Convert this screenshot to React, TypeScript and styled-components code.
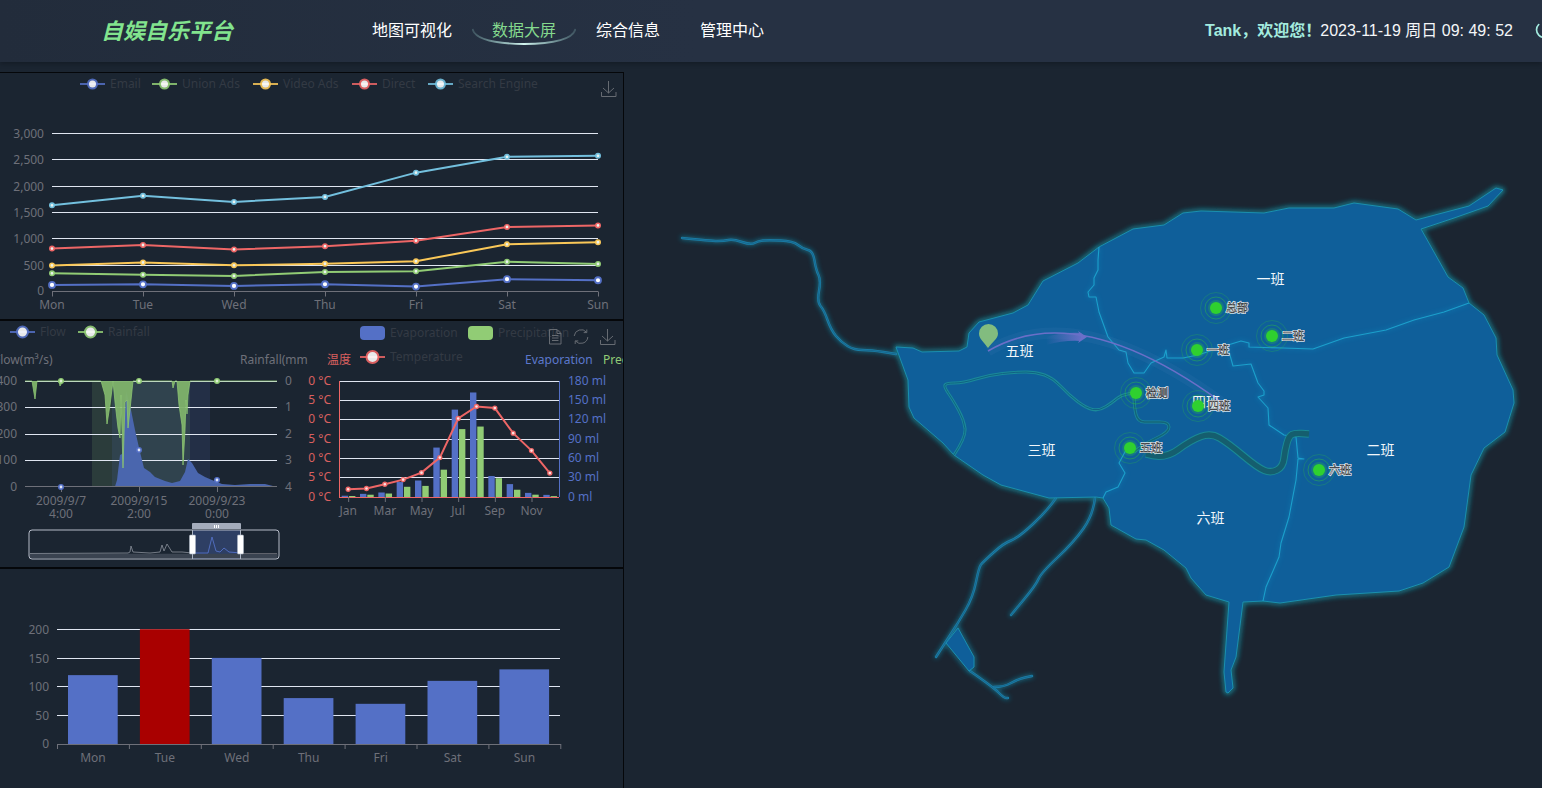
import React from "react";
import styled, { createGlobalStyle } from "styled-components";
import { Power } from "lucide-react";

const GlobalStyle = createGlobalStyle`
  html, body { margin: 0; padding: 0; height: 100%; overflow: hidden; background: #1b2531; }
  body { font-family: "Noto Sans", "Noto Sans CJK SC", sans-serif; }
  #root { height: 100%; }
`;

const Page = styled.div`
  width: 1542px;
  height: 788px;
  overflow: hidden;
  display: flex;
  flex-direction: column;
  background: #1b2531;
`;

const Header = styled.header`
  flex: 0 0 62px;
  height: 62px;
  box-sizing: border-box;
  padding-bottom: 4px;
  display: flex;
  align-items: center;
  background: linear-gradient(90deg, #222c3b 0%, #263143 45%, #263143 100%);
  box-shadow: 0 2px 4px rgba(10, 14, 20, 0.35);
  position: relative;
  z-index: 2;
`;

const Logo = styled.div`
  width: 251px;
  padding-left: 101px;
  flex: none;
  font: italic 700 22px "Noto Sans CJK SC", sans-serif;
  color: #82e48e;
`;

const Nav = styled.nav`
  display: flex;
  flex: none;
`;

const NavItem = styled.a<{ $active?: boolean }>`
  position: relative;
  padding: 0 20px;
  font: 400 16px/22px "Noto Sans CJK SC", sans-serif;
  color: ${(p) => (p.$active ? "#84d98e" : "#ffffff")};
`;

const NavArc = styled.svg`
  position: absolute;
  left: 0;
  top: 10px;
  width: 104px;
  height: 18px;
`;

const Status = styled.div`
  margin-left: 421px;
  flex: none;
  display: flex;
  align-items: center;
  font: 400 16px "Liberation Sans", "Noto Sans CJK SC", sans-serif;
  color: #f4f6f8;
  white-space: pre;
`;

const Greeting = styled.span`
  font-weight: 700;
  color: #a3ebdf;
  margin-right: -1px;
`;

const PowerSlot = styled.span`
  display: flex;
  margin-left: 21px;
  color: #a3ebdf;
`;

const Main = styled.main`
  flex: 1;
  display: flex;
  min-height: 0;
`;

const LeftColumn = styled.section`
  flex: 0 0 624px;
  padding-top: 10px;
  margin-left: -1px;
  width: 625px;
`;

const Panel = styled.div`
  height: 248px;
  box-sizing: border-box;
  border: 1px solid #05070a;
  display: flex;
  overflow: hidden;
`;

const ChartSvg = styled.svg<{ $w: number }>`
  display: block;
  flex: 0 0 ${(p) => p.$w}px;
  width: ${(p) => p.$w}px;
  height: 246px;
  overflow: hidden;
`;

const MapPane = styled.section`
  flex: 1;
  min-width: 0;
`;

const MapSvg = styled.svg`
  display: block;
  width: 919px;
  height: 726px;
`;

const AxisText = styled.text<{ $c?: string }>`
  font-size: 12px;
  fill: ${(p) => p.$c ?? "#6e7079"};
`;

const LegendText = styled.text`
  font-size: 12px;
  fill: #333a44;
`;

const GridLine = styled.line`
  stroke: #e0e6f1;
  stroke-width: 1;
`;

const AxisLine = styled.line<{ $c?: string }>`
  stroke: ${(p) => p.$c ?? "#6e7079"};
  stroke-width: 1;
`;

const ToolIcon = styled.g`
  fill: none;
  stroke: #666b72;
  stroke-width: 1;
`;

const RegionName = styled.text`
  font: 14px "Noto Sans CJK SC", sans-serif;
  fill: #f2f7fb;
  text-anchor: middle;
`;

const SiteHalo = styled.text`
  font: 400 11px "Noto Sans CJK SC", sans-serif;
  fill: none;
  stroke: #ffffff;
  stroke-opacity: 0.85;
  stroke-width: 2px;
`;

const SiteName = styled.text`
  font: 400 11px "Noto Sans CJK SC", sans-serif;
  fill: #ffffff;
  stroke: #16181a;
  stroke-width: 0.45px;
`;

const palette = { blue: "#5470c6", green: "#91cc75", yellow: "#fac858", red: "#ee6666", cyan: "#73c0de" };

type P = [number, number];
const linear = (pts: P[]) => "M" + pts.map((p) => p.join(" ")).join("L");
const smooth = (pts: P[]) => {
  let d = `M${pts[0][0]} ${pts[0][1]}`;
  for (let i = 1; i < pts.length - 1; i++) {
    const mx = (pts[i][0] + pts[i + 1][0]) / 2;
    const my = (pts[i][1] + pts[i + 1][1]) / 2;
    d += `Q${pts[i][0]} ${pts[i][1]} ${mx} ${my}`;
  }
  const l = pts[pts.length - 1];
  return d + `L${l[0]} ${l[1]}`;
};

const LegendLine = ({ x, y, c, r = 5 }: { x: number; y: number; c: string; r?: number }) => (
  <g>
    <line x1={x} x2={x + 25} y1={y} y2={y} stroke={c} strokeWidth={2} opacity={0.85} />
    <circle cx={x + 12.5} cy={y} r={r} fill="#fff" stroke={c} strokeWidth={2} opacity={0.9} />
  </g>
);

const Download = ({ x, y }: { x: number; y: number }) => (
  <ToolIcon transform={`translate(${x} ${y})`}>
    <path d="M7.5 0V12M2 7L7.5 12L13 7M0.5 11V15.5H15V11" />
  </ToolIcon>
);

/* ---------- stacked traffic lines ---------- */
const days = ["Mon", "Tue", "Wed", "Thu", "Fri", "Sat", "Sun"];
const stacked: { c: string; v: number[]; big?: boolean }[] = [
  { c: palette.blue, v: [120, 132, 101, 134, 90, 230, 210], big: true },
  { c: palette.green, v: [340, 314, 292, 368, 380, 560, 520] },
  { c: palette.yellow, v: [490, 546, 493, 522, 570, 890, 930] },
  { c: palette.red, v: [810, 878, 794, 856, 960, 1220, 1250] },
  { c: palette.cyan, v: [1630, 1810, 1695, 1790, 2250, 2550, 2570] },
];
const lineLegend = [
  { x: 80, t: "Email", c: palette.blue },
  { x: 152, t: "Union Ads", c: palette.green },
  { x: 253, t: "Video Ads", c: palette.yellow },
  { x: 352, t: "Direct", c: palette.red },
  { x: 428, t: "Search Engine", c: palette.cyan },
];

const TrafficChart = () => {
  const xs = days.map((_, i) => 52 + i * 91);
  const yOf = (v: number) => 291.3 - (v * 158.2) / 3000;
  const grid = [
    [133.5, "3,000"], [159.5, "2,500"], [186.5, "2,000"], [212.5, "1,500"], [238.5, "1,000"], [265.5, "500"],
  ] as [number, string][];
  return (
    <ChartSvg $w={623} viewBox="0 73 623 246">
      {lineLegend.map((l) => (
        <g key={l.t}>
          <LegendLine x={l.x} y={84} c={l.c} r={4.5} />
          <LegendText x={l.x + 30} y={88}>{l.t}</LegendText>
        </g>
      ))}
      <Download x={601} y={81} />
      {grid.map(([y, t]) => (
        <g key={t}>
          <GridLine x1={52} x2={598} y1={y} y2={y} />
          <AxisText x={44} y={y + 4} textAnchor="end">{t}</AxisText>
        </g>
      ))}
      <AxisText x={44} y={295} textAnchor="end">0</AxisText>
      <AxisLine x1={52} x2={598} y1={291.5} y2={291.5} />
      {xs.map((x, i) => (
        <g key={x}>
          <AxisLine x1={x + 0.5} x2={x + 0.5} y1={291.5} y2={296.5} />
          <AxisText x={x} y={309} textAnchor="middle">{days[i]}</AxisText>
        </g>
      ))}
      {stacked.map((s) => (
        <g key={s.c}>
          <path d={linear(s.v.map((v, i) => [xs[i], yOf(v)] as P))} fill="none" stroke={s.c} strokeWidth={2} />
          {s.v.map((v, i) => (
            <circle
              key={i}
              cx={xs[i]}
              cy={yOf(v)}
              r={s.big ? 3 : 2.2}
              fill={s.big ? "#fff" : "#eaf3ef"}
              stroke={s.c}
              strokeWidth={s.big ? 1.8 : 1.6}
            />
          ))}
        </g>
      ))}
    </ChartSvg>
  );
};

/* ---------- flow and rainfall ---------- */
const flowArea: P[] = [
  [25, 486], [60, 486.5], [115, 486.5], [117, 480], [120, 455], [122, 454], [124, 430], [126, 391], [130, 405], [135, 430],
  [140, 452], [144, 468], [150, 472], [155, 477], [165, 481], [172, 483], [180, 481], [185, 472], [188, 459],
  [192, 463], [198, 473], [205, 477], [212, 480], [222, 484], [235, 485], [250, 484], [265, 484], [277, 487], [25, 487],
];
const rainArea: P[] = [
  [25, 381], [32, 381], [35, 399], [37, 381], [59, 381], [60, 386], [63, 381], [101, 381], [105, 395], [107, 424], [110, 405],
  [113, 381], [115, 402], [118, 428], [120, 438], [121, 395], [123, 468], [125, 402], [127, 400], [128, 428], [131, 400],
  [133, 381], [172, 381], [173, 388], [175, 381], [177, 381], [179, 405], [182, 425], [183, 465], [185, 430], [186, 400],
  [187, 414], [188, 395], [190, 381], [277, 381],
];

const FlowChart = () => (
  <ChartSvg $w={308} viewBox="0 321 308 246">
    <LegendLine x={10} y={332} c={palette.blue} r={5.5} />
    <LegendText x={40} y={336}>Flow</LegendText>
    <LegendLine x={78} y={332} c={palette.green} r={5.5} />
    <LegendText x={108} y={336}>Rainfall</LegendText>
    <AxisText x={-6} y={364}>Flow(m³/s)</AxisText>
    <AxisText x={240} y={364}>Rainfall(mm)</AxisText>
    <rect x={92} y={381} width={98} height={106} fill="#91cc75" opacity={0.14} />
    <rect x={112} y={381} width={98} height={106} fill="#5470c6" opacity={0.14} />
    {[381.5, 407.5, 434.5, 460.5].map((y) => <GridLine key={y} x1={25} x2={277} y1={y} y2={y} />)}
    {["400", "300", "200", "100", "0"].map((t, i) => (
      <AxisText key={t} x={17} y={[385, 411, 438, 464, 491][i]} textAnchor="end">{t}</AxisText>
    ))}
    {["0", "1", "2", "3", "4"].map((t, i) => (
      <AxisText key={t} x={285} y={[385, 411, 438, 464, 491][i]}>{t}</AxisText>
    ))}
    <path d={linear(flowArea)} fill="#4a66ae" />
    <path d={linear(rainArea)} fill="#7fb36a" fillOpacity={0.95} stroke="#8cc472" strokeWidth={0.8} />
    <AxisLine x1={25} x2={277} y1={486.5} y2={486.5} />
    {[
      [61, "2009/9/7", "4:00"],
      [139, "2009/9/15", "2:00"],
      [217, "2009/9/23", "0:00"],
    ].map(([x, a, b]) => (
      <g key={a as string}>
        <AxisLine x1={(x as number) + 0.5} x2={(x as number) + 0.5} y1={487} y2={492} />
        <AxisText x={x as number} y={505} textAnchor="middle">{a}</AxisText>
        <AxisText x={x as number} y={518} textAnchor="middle">{b}</AxisText>
      </g>
    ))}
    {[[61, 487], [139, 450], [217, 480]].map(([x, y]) => (
      <circle key={x} cx={x} cy={y} r={2.2} fill="#dfe6f8" stroke={palette.blue} strokeWidth={1.6} />
    ))}
    {[61, 139, 217].map((x) => (
      <circle key={x} cx={x} cy={381} r={2.2} fill="#dff0d4" stroke={palette.green} strokeWidth={1.6} />
    ))}
    {/* range slider */}
    <rect x={192} y={530} width={49} height={29} fill="#5470c6" opacity={0.35} />
    <path d="M29.5 553.7H277.5V558H29.5Z" fill="#3a4350" />
    <path
      d={linear([[30, 553.5], [128, 553], [130, 552], [131, 546], [133, 552], [150, 553], [160, 552], [162, 545], [164, 551], [167, 544], [172, 552], [182, 552], [192, 553]])}
      fill="none"
      stroke="#8a909a"
      strokeWidth={0.8}
    />
    <path
      d={linear([[192, 553], [208, 553], [212, 537], [216, 551], [220, 552], [224, 548], [229, 552], [241, 553]])}
      fill="none"
      stroke={palette.blue}
      strokeWidth={0.9}
    />
    <path d="M241 553.5H277" stroke="#6e7079" strokeWidth={0.8} />
    <rect x={29} y={530} width={250} height={29} rx={3} fill="none" stroke="#b6bcc8" strokeWidth={1} />
    <path d="M192 529V523.5Q192 523 193 523H240Q241 523 241 524V529Z" fill="#a4acbb" />
    <path d="M214.5 525V528M216.5 525V528M218.5 525V528" stroke="#fff" strokeWidth={1} />
    <path d="M192.5 530V559M240.5 530V559" stroke="#aab3c2" strokeWidth={1} />
    <rect x={189.5} y={535} width={6} height={19} rx={1} fill="#fff" stroke="#aab3c2" strokeWidth={0.6} />
    <rect x={237.5} y={535} width={6} height={19} rx={1} fill="#fff" stroke="#aab3c2" strokeWidth={0.6} />
  </ChartSvg>
);

/* ---------- evaporation, precipitation, temperature ---------- */
const evap = [2, 4.9, 7, 23.2, 25.6, 76.7, 135.6, 162.2, 32.6, 20, 6.4, 3.3];
const precip = [2.6, 5.9, 9, 26.4, 28.7, 70.7, 175.6, 182.2, 48.7, 18.8, 6, 2.3];
const temp = [2, 2.2, 3.3, 4.5, 6.3, 10.2, 20.3, 23.4, 23, 16.5, 12, 6.2];
const climateGrid = [381.5, 400.5, 419.5, 439.5, 458.5, 477.5];

const ClimateChart = () => {
  const cx = (i: number) => 339 + (i + 0.5) * (220 / 12);
  const base = 497;
  const h = 116;
  return (
    <ChartSvg $w={315} viewBox="308 321 315 246">
      <rect x={360} y={326} width={25} height={14} rx={4} fill={palette.blue} />
      <LegendText x={390} y={337}>Evaporation</LegendText>
      <rect x={468} y={326} width={25} height={14} rx={4} fill={palette.green} />
      <LegendText x={498} y={337}>Precipitation</LegendText>
      <LegendLine x={360} y={357} c={palette.red} r={6} />
      <LegendText x={390} y={361}>Temperature</LegendText>
      <ToolIcon transform="translate(549 329)">
        <path d="M0.5 0.5H8L12 4.5V15H0.5ZM8 0.5V4.5H12M3 6.5H9.5M3 9H9.5M3 11.5H9.5" />
      </ToolIcon>
      <ToolIcon transform="translate(573 329)">
        <path d="M1.2 7A7 7 0 0 1 13.5 3.2M14.8 8A7 7 0 0 1 2.5 12M13.8 0.5V3.6H10.7M2.2 15V11.9H5.3" />
      </ToolIcon>
      <Download x={600} y={329} />
      <AxisText x={327} y={364} $c="#d9605f">温度</AxisText>
      <AxisText x={525} y={364} $c="#5c78cc">Evaporation</AxisText>
      <AxisText x={603} y={364} $c="#91cc75">Precipitation</AxisText>
      {climateGrid.map((y) => <GridLine key={y} x1={339} x2={559} y1={y} y2={y} />)}
      {["30 °C", "25 °C", "20 °C", "15 °C", "10 °C", "5 °C", "0 °C"].map((t, i) => (
        <AxisText key={t} x={331} y={[385, 404, 423, 443, 462, 481, 501][i]} textAnchor="end" $c="#d9605f">{t}</AxisText>
      ))}
      {["180 ml", "150 ml", "120 ml", "90 ml", "60 ml", "30 ml", "0 ml"].map((t, i) => (
        <AxisText key={t} x={568} y={[385, 404, 423, 443, 462, 481, 501][i]} $c="#5470c6">{t}</AxisText>
      ))}
      {evap.map((v, i) => (
        <rect key={i} x={cx(i) - 6.5} y={base - (v * h) / 180} width={6.4} height={(v * h) / 180} fill={palette.blue} />
      ))}
      {precip.map((v, i) => (
        <rect key={i} x={cx(i) + 0.8} y={base - (v * h) / 300} width={6.4} height={(v * h) / 300} fill={palette.green} />
      ))}
      <AxisLine x1={339.5} x2={339.5} y1={381} y2={497} $c="#ee6666" />
      <AxisLine x1={559.5} x2={559.5} y1={381} y2={497} $c={palette.blue} />
      <AxisLine x1={339} x2={559} y1={497.5} y2={497.5} $c="#ee6666" />
      {["Jan", "Mar", "May", "Jul", "Sep", "Nov"].map((t, i) => (
        <g key={t}>
          <AxisLine x1={cx(i * 2) + 0.5} x2={cx(i * 2) + 0.5} y1={497} y2={502} />
          <AxisText x={cx(i * 2)} y={515} textAnchor="middle">{t}</AxisText>
        </g>
      ))}
      <path d={linear(temp.map((v, i) => [cx(i), base - (v * h) / 30] as P))} fill="none" stroke={palette.red} strokeWidth={2} />
      {temp.map((v, i) => (
        <circle key={i} cx={cx(i)} cy={base - (v * h) / 30} r={2} fill="#fde0e0" stroke={palette.red} strokeWidth={1.3} />
      ))}
    </ChartSvg>
  );
};

/* ---------- weekly bars ---------- */
const weekly = [120, 200, 150, 80, 70, 110, 130];
const WeeklyChart = () => {
  const grid = [[629.5, "200"], [658.5, "150"], [686.5, "100"], [715.5, "50"]] as [number, string][];
  return (
    <ChartSvg $w={623} viewBox="0 569 623 246">
      {grid.map(([y, t]) => (
        <g key={t}>
          <GridLine x1={57} x2={560} y1={y} y2={y} />
          <AxisText x={49} y={y + 4} textAnchor="end">{t}</AxisText>
        </g>
      ))}
      <AxisText x={49} y={748} textAnchor="end">0</AxisText>
      {weekly.map((v, i) => (
        <rect
          key={i}
          x={68 + i * 71.9}
          y={744 - v * 0.574}
          width={49.7}
          height={v * 0.574}
          fill={v === 200 ? "#a90000" : "#5470c6"}
        />
      ))}
      <AxisLine x1={57} x2={561} y1={744.5} y2={744.5} />
      {[...Array(8)].map((_, i) => (
        <AxisLine key={i} x1={57.5 + i * 71.9} x2={57.5 + i * 71.9} y1={744} y2={749} />
      ))}
      {days.map((d, i) => (
        <AxisText key={d} x={93 + i * 71.9} y={762} textAnchor="middle">{d}</AxisText>
      ))}
    </ChartSvg>
  );
};

/* ---------- campus map ---------- */
const outline: P[] = [
  [895, 347], [912, 348], [921, 352], [958, 351], [966, 347], [968, 333], [978, 322], [1012, 313], [1027, 305], [1042, 281],
  [1077, 263], [1098, 247], [1132, 229], [1163, 225], [1182, 213], [1200, 211], [1263, 213], [1288, 208], [1333, 208],
  [1353, 203], [1397, 209], [1415, 220], [1468, 206], [1495, 188], [1502, 190], [1487, 206], [1453, 218], [1420, 229],
  [1447, 277], [1462, 288], [1468, 303], [1483, 315], [1495, 338], [1496, 355], [1512, 390], [1513, 403], [1504, 432],
  [1483, 448], [1470, 475], [1463, 527], [1448, 567], [1422, 583], [1398, 591], [1335, 595], [1279, 603], [1262, 601],
  [1242, 602], [1235, 657], [1230, 670], [1232, 688], [1227, 693], [1225, 692], [1223, 672], [1228, 602], [1205, 595],
  [1190, 578], [1185, 568], [1163, 550], [1145, 540], [1135, 539], [1110, 525], [1108, 508], [1102, 498], [1095, 497],
  [1048, 498], [1000, 485], [982, 475], [953, 455], [942, 443], [913, 418], [908, 407], [907, 380],
];
const pond: P[] = [[957, 628], [973, 657], [973, 667], [968, 671], [945, 643]];

const borders: P[][] = [
  [[1098, 247], [1097, 260], [1097, 270], [1093, 278], [1093, 285], [1087, 292], [1088, 297], [1095, 297], [1098, 312], [1107, 337], [1118, 350], [1125, 352], [1127, 363], [1133, 373], [1143, 373], [1150, 363], [1163, 357], [1165, 350], [1166, 358], [1182, 358], [1197, 355], [1227, 345], [1240, 341], [1248, 343], [1248, 347], [1282, 348], [1312, 349], [1343, 338], [1385, 330], [1413, 320], [1443, 312], [1468, 303]],
  [[1227, 348], [1232, 366], [1250, 364], [1257, 383], [1263, 391], [1263, 395], [1257, 397], [1267, 408], [1268, 425], [1283, 435], [1295, 437], [1297, 458], [1303, 459], [1297, 459], [1295, 480], [1288, 517], [1280, 543], [1278, 557], [1265, 587], [1262, 601]],
  [[1125, 450], [1118, 463], [1124, 473], [1117, 487], [1105, 492], [1102, 498]],
];

const thinRiver: P[] = [
  [953, 455], [965, 437], [963, 420], [952, 400], [943, 387], [945, 383], [962, 383], [988, 375], [1015, 372], [1035, 372], [1052, 378], [1068, 395], [1085, 408], [1098, 411], [1112, 402], [1120, 395], [1133, 393],
];
const narrowRiver: P[] = [[1133, 393], [1133, 407], [1137, 422], [1150, 422], [1168, 422], [1168, 432], [1145, 443], [1133, 452]];
const wideRiver: P[] = [
  [1145, 454], [1163, 460], [1190, 440], [1210, 433], [1227, 443], [1257, 468], [1270, 473], [1282, 467], [1284, 450], [1288, 436], [1294, 433], [1308, 434],
];

const outerRivers: P[][] = [
  [[681, 238], [710, 241], [723, 241], [732, 239], [750, 245], [757, 241], [767, 240], [792, 241], [802, 249], [812, 251], [815, 270], [820, 280], [816, 302], [823, 310], [830, 330], [840, 342], [853, 350], [870, 350], [895, 354]],
  [[1055, 498], [1047, 510], [1017, 538], [1003, 543], [982, 562], [978, 567], [972, 597], [957, 623], [944, 643], [935, 657]],
  [[969, 671], [992, 687], [1003, 698], [1007, 698]],
  [[993, 687], [1003, 687], [1017, 679], [1031, 676]],
  [[1094, 498], [1092, 515], [1073, 542], [1040, 573], [1035, 585], [1010, 615]],
];

const regions: [string, number, number][] = [
  ["一班", 1269.5, 284], ["五班", 1018.5, 356], ["三班", 1040.5, 455], ["二班", 1379.5, 455], ["六班", 1209.5, 523], ["四班", 1205, 407],
];
const sites: [string, number, number][] = [
  ["总部", 1215, 308], ["二班", 1271, 336], ["一班", 1196, 350], ["检测", 1135, 393], ["四班", 1197, 406], ["五班", 1129, 448], ["六班", 1318, 470],
];

const CampusMap = () => (
  <MapSvg viewBox="623 62 919 726">
    <defs>
      <filter id="edgeGlow" x="-10%" y="-10%" width="120%" height="120%">
        <feGaussianBlur in="SourceGraphic" stdDeviation="2.6" />
      </filter>
      <linearGradient id="trail" gradientUnits="userSpaceOnUse" x1="1045" y1="338" x2="1080" y2="337">
        <stop offset="0" stopColor="#6a6fc8" stopOpacity="0" />
        <stop offset="1" stopColor="#6a6fc8" stopOpacity="0.95" />
      </linearGradient>
    </defs>

    <g filter="url(#edgeGlow)" opacity={0.85}>
      {outerRivers.map((r, i) => (
        <path key={i} d={smooth(r)} fill="none" stroke="#158aa8" strokeWidth={3} strokeLinejoin="round" strokeLinecap="round" />
      ))}
      <path d={linear(pond) + "Z"} fill="none" stroke="#158aa8" strokeWidth={3} />
      <path d={linear(outline) + "Z"} fill="none" stroke="#16a0b4" strokeWidth={3.5} strokeLinejoin="round" />
    </g>
    {outerRivers.map((r, i) => (
      <g key={i}>
        <path d={smooth(r)} fill="none" stroke="#1b7ea6" strokeWidth={2.4} strokeLinecap="round" />
        <path d={smooth(r)} fill="none" stroke="#14577f" strokeWidth={0.6} strokeLinecap="round" />
      </g>
    ))}
    <path d={linear(pond) + "Z"} fill="#0f5f9a" stroke="#1a8fb0" strokeWidth={1} strokeLinejoin="round" />
    <path d={linear(outline) + "Z"} fill="#0f5f9a" stroke="#1a8fae" strokeWidth={1} strokeLinejoin="round" />

    <g filter="url(#edgeGlow)" opacity={0.35}>
      {borders.map((b, i) => (
        <path key={i} d={linear(b)} fill="none" stroke="#19a6d2" strokeWidth={2} />
      ))}
    </g>
    {borders.map((b, i) => (
      <path key={i} d={linear(b)} fill="none" stroke="#1ba0cc" strokeWidth={1.1} strokeLinejoin="round" />
    ))}

    <path d={smooth(thinRiver)} fill="none" stroke="#1a8a9a" strokeWidth={3} />
    <path d={smooth(thinRiver)} fill="none" stroke="#106382" strokeWidth={1} />
    <path d={smooth(narrowRiver)} fill="none" stroke="#1a8a9a" strokeWidth={3} />
    <path d={smooth(narrowRiver)} fill="none" stroke="#146479" strokeWidth={1.4} />
    <path d={smooth(wideRiver)} fill="none" stroke="#1a8a95" strokeWidth={7.5} strokeLinejoin="round" />
    <path d={smooth(wideRiver)} fill="none" stroke="#155e6e" strokeWidth={5.5} strokeLinejoin="round" />

    <path d="M987 351Q1077 298 1220 402" fill="none" stroke="#7f9fd8" strokeWidth={11} strokeOpacity={0.07} />
    <path d="M987 351Q1077 298 1220 402" fill="none" stroke="#6a6fc8" strokeWidth={1.5} />
    <path d="M1045 341Q1062 336 1080 337" fill="none" stroke="url(#trail)" strokeWidth={8} />
    <path d="M1077 331L1086 337L1077 343L1080 337Z" fill="#6a6fc8" />
    <path d="M987 348C983 342 978 339 978 333.5A9.5 9.5 0 0 1 997 333.5C997 339 991 342 987 348Z" fill="#82bc7f" />

    {regions.map(([t, x, y]) => <RegionName key={t} x={x} y={y}>{t}</RegionName>)}

    {sites.map(([t, x, y]) => (
      <g key={t}>
        <circle cx={x} cy={y} r={15.5} fill="none" stroke="#2fc93a" strokeOpacity={0.25} />
        <circle cx={x} cy={y} r={11} fill="none" stroke="#2fc93a" strokeOpacity={0.42} />
        <circle cx={x} cy={y} r={8} fill="#2fc93a" fillOpacity={0.25} />
        <circle cx={x} cy={y} r={6} fill="#2fd02f" />
        <SiteHalo x={x + 10} y={y + 4}>{t}</SiteHalo>
        <SiteName x={x + 10} y={y + 4}>{t}</SiteName>
      </g>
    ))}
  </MapSvg>
);

export default function App() {
  return (
    <Page>
      <GlobalStyle />
      <Header>
        <Logo>自娱自乐平台</Logo>
        <Nav>
          <NavItem>地图可视化</NavItem>
          <NavItem $active>
            数据大屏
            <NavArc viewBox="0 0 104 18">
              <defs>
                <linearGradient id="arcFade" x1="0" x2="1" y1="0" y2="0">
                  <stop offset="0" stopColor="#a8e6de" stopOpacity="0.2" />
                  <stop offset="0.5" stopColor="#d2f5ef" />
                  <stop offset="1" stopColor="#a8e6de" stopOpacity="0.2" />
                </linearGradient>
              </defs>
              <path d="M0.5 1Q4 15.5 52 16Q100 15.5 103.5 1" fill="none" stroke="url(#arcFade)" strokeWidth={1.8} />
            </NavArc>
          </NavItem>
          <NavItem>综合信息</NavItem>
          <NavItem>管理中心</NavItem>
        </Nav>
        <Status>
          <Greeting>Tank，欢迎您！</Greeting>
          2023-11-19 周日 09: 49: 52
          <PowerSlot>
            <Power size={20} />
          </PowerSlot>
        </Status>
      </Header>
      <Main>
        <LeftColumn>
          <Panel>
            <TrafficChart />
          </Panel>
          <Panel>
            <FlowChart />
            <ClimateChart />
          </Panel>
          <Panel>
            <WeeklyChart />
          </Panel>
        </LeftColumn>
        <MapPane>
          <CampusMap />
        </MapPane>
      </Main>
    </Page>
  );
}
